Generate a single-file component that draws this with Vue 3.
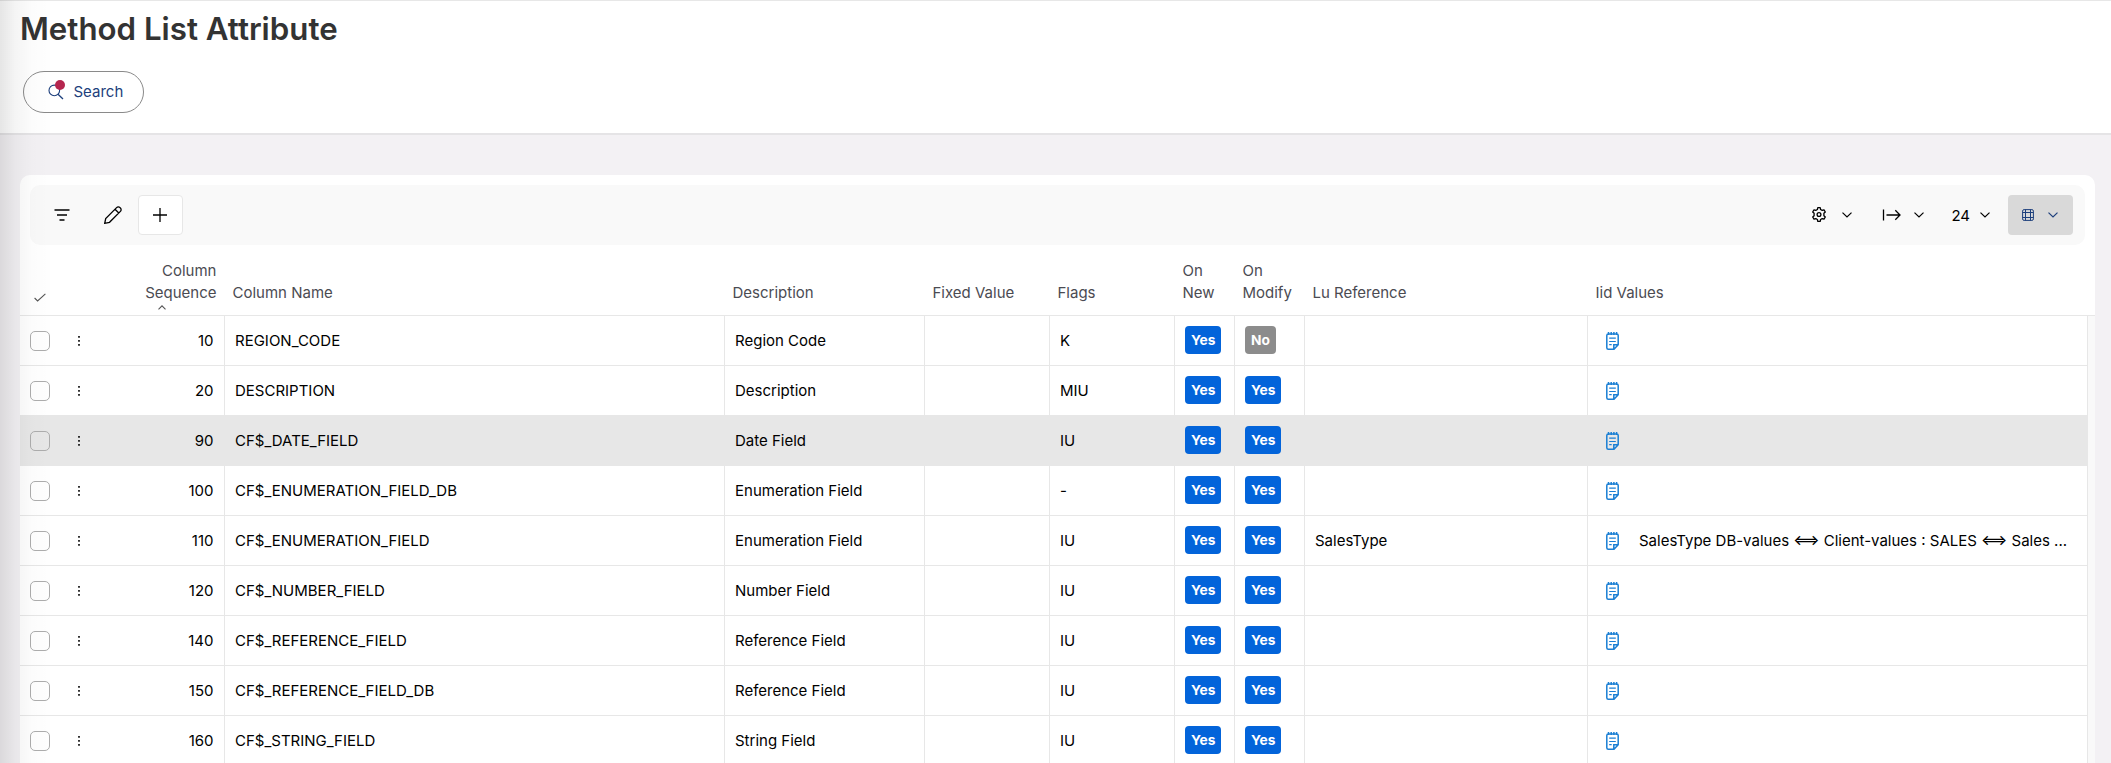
<template>
  <div class="page">
    <div class="edge-shadow"></div>

    <header class="page-header">
      <h1 class="title">Method List Attribute</h1>
      <button class="search-btn" type="button">
        <svg class="search-icon" viewBox="0 0 18 20" width="18" height="20">
          <circle cx="6.3" cy="10.4" r="5.3" fill="none" stroke="#1d3f7c" stroke-width="1.1" />
          <path d="M10 14.2l5 4.8" fill="none" stroke="#1d3f7c" stroke-width="1.3" />
          <circle cx="12" cy="5" r="5" fill="#b5264f" />
        </svg>
        <span class="search-label">Search</span>
      </button>
    </header>

    <section class="card">
      <div class="toolbar">
        <div class="tools">
          <button class="tool filter" type="button">
            <svg viewBox="0 0 16 12" width="16" height="12">
              <path d="M.5 1h15M3 6h10M5.5 11h5" class="stroke" />
            </svg>
          </button>
          <button class="tool edit" type="button">
            <svg viewBox="0 0 18 18" width="18" height="18">
              <path d="M.7 17.3l1-4.8L12.6 1.6a2.4 2.4 0 0 1 3.4 0l.4.4a2.4 2.4 0 0 1 0 3.4L5.5 16.3zM11 3.2l3.8 3.8" class="stroke" />
            </svg>
          </button>
          <button class="tool add" type="button">
            <svg viewBox="0 0 14 14" width="14" height="14">
              <path d="M7 0v14M0 7h14" class="stroke" />
            </svg>
          </button>
        </div>

        <div class="tools">
          <button class="drop settings" type="button">
            <svg viewBox="0 0 16 16" width="16" height="16">
              <path d="M6.4 2.5L6.8.7h2.4l.4 1.8 1.6.9 1.8-.6 1.3 2.2-1.4 1.3v2.4l1.4 1.3-1.3 2.2-1.8-.6-1.6.9-.4 1.8H6.8l-.4-1.8-1.6-.9-1.8.6-1.3-2.2 1.4-1.3V6.3L1.7 5 3 2.8l1.8.6z" class="stroke gear" />
              <circle cx="8" cy="7.5" r="1.9" class="stroke" />
            </svg>
            <svg class="chevron" viewBox="0 0 10 6" width="10" height="6"><path d="M.5.6L5 5 9.5.6" class="thin" /></svg>
          </button>
          <button class="drop export" type="button">
            <svg viewBox="0 0 19 12" width="19" height="12">
              <path d="M1.5.5v11M4.5 6H18M13.3 1.2L18 6l-4.7 4.8" class="stroke" />
            </svg>
            <svg class="chevron" viewBox="0 0 10 6" width="10" height="6"><path d="M.5.6L5 5 9.5.6" class="thin" /></svg>
          </button>
          <button class="drop size" type="button">
            <span>24</span>
            <svg class="chevron" viewBox="0 0 10 6" width="10" height="6"><path d="M.5.6L5 5 9.5.6" class="thin" /></svg>
          </button>
          <button class="drop layout" type="button">
            <svg viewBox="0 0 12 12" width="12" height="12">
              <rect x=".6" y=".6" width="10.8" height="10.8" rx="1.5" />
              <path d="M3.5.6v10.8M8.5.6v10.8M.6 3.5h10.8M.6 8.5h10.8" />
            </svg>
            <svg class="chevron" viewBox="0 0 10 6" width="10" height="6"><path d="M.5.6L5 5 9.5.6" class="thin" /></svg>
          </button>
        </div>
      </div>

      <div class="grid head">
        <div class="th th-check">
          <svg viewBox="0 0 12 9" width="12" height="9"><path d="M.6 5l3 3L11.4.8" /></svg>
        </div>
        <div class="th"></div>
        <div class="th th-seq">
          Column<br />Sequence
          <svg class="sort" viewBox="0 0 8 5" width="8" height="5"><path d="M.5 4.3L4 .8l3.5 3.5" /></svg>
        </div>
        <div v-for="name in headings" :key="name" class="th">{{ name }}</div>
      </div>

      <div class="body">
        <div class="rows">
          <div v-for="row in rows" :key="row.seq" class="grid row" :class="{ active: row.active }">
            <div class="td td-check"><span class="checkbox"></span></div>
            <div class="td td-menu">
              <svg viewBox="0 0 2 10" width="2" height="10">
                <path d="M.2 0h1.6v1.7H.2zM.2 4h1.6v1.7H.2zM.2 8h1.6v1.7H.2z" />
              </svg>
            </div>
            <div class="td td-seq">{{ row.seq }}</div>
            <div class="td">{{ row.name }}</div>
            <div class="td">{{ row.desc }}</div>
            <div class="td"></div>
            <div class="td">{{ row.flags }}</div>
            <div class="td"><span class="badge" :class="{ off: !row.onNew }">{{ row.onNew ? 'Yes' : 'No' }}</span></div>
            <div class="td"><span class="badge" :class="{ off: !row.onModify }">{{ row.onModify ? 'Yes' : 'No' }}</span></div>
            <div class="td">{{ row.ref }}</div>
            <div class="td td-iid">
              <svg viewBox="0 0 13 18" width="13" height="18">
                <path d="M.8 3.5Q.8 2 2.300 2h8.400q1.500 0 1.500 1.500v9.200L8 17.200H2.300Q.8 17.200.8 15.700zM7.800 17v-4.300H12M2.500 0v3M5.200 0v3M7.900 0v3M10.600 0v3" class="note" />
                <path d="M3.200 6.200h6.600M3.200 9.500h6.600M3.200 12.700h2.500" class="note-line" />
              </svg>
              <span class="iid-text">{{ row.iid }}</span>
            </div>
          </div>
        </div>
        <div class="gutter"></div>
      </div>
    </section>
  </div>
</template>

<script setup>
const headings = ['Column Name', 'Description', 'Fixed Value', 'Flags', 'On New', 'On Modify', 'Lu Reference', 'Iid Values']

const rows = [
  { seq: 10, name: 'REGION_CODE', desc: 'Region Code', flags: 'K', onNew: true, onModify: false },
  { seq: 20, name: 'DESCRIPTION', desc: 'Description', flags: 'MIU', onNew: true, onModify: true },
  { seq: 90, name: 'CF$_DATE_FIELD', desc: 'Date Field', flags: 'IU', onNew: true, onModify: true, active: true },
  { seq: 100, name: 'CF$_ENUMERATION_FIELD_DB', desc: 'Enumeration Field', flags: '-', onNew: true, onModify: true },
  {
    seq: 110,
    name: 'CF$_ENUMERATION_FIELD',
    desc: 'Enumeration Field',
    flags: 'IU',
    onNew: true,
    onModify: true,
    ref: 'SalesType',
    // Inter joins <==> into one long double arrow
    iid: 'SalesType DB-values <==> Client-values : SALES <==> Sales ...'
  },
  { seq: 120, name: 'CF$_NUMBER_FIELD', desc: 'Number Field', flags: 'IU', onNew: true, onModify: true },
  { seq: 140, name: 'CF$_REFERENCE_FIELD', desc: 'Reference Field', flags: 'IU', onNew: true, onModify: true },
  { seq: 150, name: 'CF$_REFERENCE_FIELD_DB', desc: 'Reference Field', flags: 'IU', onNew: true, onModify: true },
  { seq: 160, name: 'CF$_STRING_FIELD', desc: 'String Field', flags: 'IU', onNew: true, onModify: true }
]
</script>

<style>
body {
  margin: 0;
  overflow: hidden;
}
</style>

<style scoped>
.page {
  position: relative;
  display: flex;
  flex-direction: column;
  box-sizing: border-box;
  height: 763px;
  overflow: hidden;
  background: #f3f1f4;
  font-family: Inter, 'Liberation Sans', sans-serif;
  font-size: 15px;
  color: #000;
}

.edge-shadow {
  position: absolute;
  z-index: 2;
  top: 0;
  left: 0;
  width: 50px;
  height: 100%;
  background: linear-gradient(to right, rgba(0, 0, 0, 0.1), rgba(0, 0, 0, 0.045) 30%, rgba(0, 0, 0, 0.012) 65%, rgba(0, 0, 0, 0.004));
  pointer-events: none;
}

button {
  box-sizing: border-box;
  margin: 0;
  padding: 0;
  border: none;
  background: none;
  font: inherit;
  color: inherit;
}

svg {
  display: block;
  flex: none;
}

.page-header {
  box-sizing: border-box;
  flex: none;
  height: 135px;
  padding: 8px 20px 0;
  border-top: 1px solid #e7e7e7;
  border-bottom: 2px solid #e5e4e6;
  background: #fff;
}

.title {
  margin: 0 0 22px;
  font-size: 31.25px;
  font-weight: 600;
  line-height: 40px;
  color: #333;
}

.search-btn {
  display: flex;
  align-items: center;
  width: 121px;
  height: 42px;
  margin-left: 3px;
  padding-left: 24px;
  border: 1px solid #8a8a8a;
  border-radius: 21px;
  color: #1d3f7c;
}

.search-icon {
  margin: 0 7.5px 4px 0;
}

.search-label {
  margin-bottom: 1px;
}

.card {
  display: flex;
  flex: 1;
  flex-direction: column;
  min-height: 0;
  margin: 40px 16px 0 20px;
  padding-top: 10px;
  border-radius: 10px 10px 0 0;
  background: #fff;
}

.toolbar {
  display: flex;
  flex: none;
  align-items: center;
  justify-content: space-between;
  height: 60px;
  margin: 0 10px;
  padding: 0 12px 0 10px;
  box-sizing: border-box;
  border-radius: 10px;
  background: #f9f9f9;
}

.tools {
  display: flex;
  align-items: center;
}

.tool {
  display: flex;
  align-items: center;
  justify-content: center;
  width: 45px;
  height: 40px;
}

.filter {
  padding-right: 1px;
}

.edit {
  width: 53px;
  padding-left: 3px;
}

.add {
  padding-right: 2px;
  border: 1px solid #e7e7e7;
  border-radius: 4px;
  background: #fff;
}

.stroke {
  fill: none;
  stroke: #000;
  stroke-width: 1.3;
}

.gear {
  stroke-linejoin: round;
}

.thin {
  fill: none;
  stroke: currentColor;
  stroke-width: 1.2;
}

.drop {
  display: flex;
  align-items: center;
  height: 40px;
}

.settings {
  gap: 15px;
  margin-right: 30px;
}

.export {
  gap: 13px;
  margin-right: 27px;
}

.size {
  gap: 10px;
  margin-right: 18px;
}

.layout {
  gap: 14px;
  width: 65px;
  padding-left: 14px;
  border-radius: 4px;
  background: #d9d9d9;
  color: #1d3f7c;
}

.layout rect,
.layout path {
  fill: none;
  stroke: #1d3f7c;
}

.grid {
  display: grid;
  grid-template-columns: 45px 50px 110px 500px 200px 125px 125px 60px 70px 283px 500px;
}

.head {
  flex: none;
  height: 71px;
  box-sizing: border-box;
  border-bottom: 1px solid #e7e7e7;
  color: #4b4b52;
}

.th {
  display: flex;
  align-items: flex-end;
  padding: 0 0 11px 7.5px;
  line-height: 22px;
}

.th-check {
  padding: 0 0 13px 14px;
}

.th-check path,
.sort path {
  fill: none;
  stroke: #555;
  stroke-width: 1.1;
}

.th-seq {
  position: relative;
  display: block;
  padding: 15px 8.5px 0 0;
  text-align: right;
}

.sort {
  position: absolute;
  right: 59px;
  bottom: 5px;
}

.body {
  display: flex;
  flex: 1;
  min-height: 0;
  overflow: hidden;
}

.rows {
  flex: none;
  width: 2068px;
}

.gutter {
  flex: 1;
  background: #f9f9f9;
}

.row {
  height: 50px;
}

.row.active {
  background: #e7e7e7;
}

.td {
  display: flex;
  align-items: center;
  box-sizing: border-box;
  min-width: 0;
  padding-left: 10px;
  border-right: 1px solid #e7e7e7;
  border-bottom: 1px solid #e7e7e7;
  white-space: nowrap;
}

.td-check,
.td-menu {
  border-right: none;
}

.td-menu {
  padding-left: 13px;
}

.checkbox {
  box-sizing: border-box;
  width: 20px;
  height: 20px;
  border: 1px solid #adadad;
  border-radius: 5px;
}

.td-seq {
  justify-content: flex-end;
  padding: 0 10.5px 0 0;
}

.badge {
  padding: 0 6px;
  margin-bottom: 1px;
  border-radius: 4px;
  background: #0364da;
  color: #fff;
  font-size: 13.75px;
  font-weight: 700;
  line-height: 28px;
}

.badge.off {
  background: #8c8c8c;
}

.td-iid {
  gap: 20px;
  padding-left: 18px;
}

.note,
.note-line {
  fill: none;
  stroke: #1a7fd4;
  stroke-width: 1.5;
}

.note-line {
  stroke-width: 1.2;
}
</style>
